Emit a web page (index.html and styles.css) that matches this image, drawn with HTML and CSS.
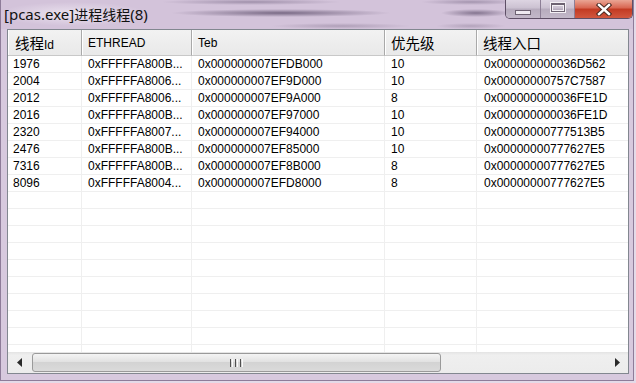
FILE: index.html
```html
<!DOCTYPE html>
<html>
<head>
    <meta charset="UTF-8">
    <title>[pcas.exe]进程线程(8)</title>
    <link rel="stylesheet" href="styles.css">
</head>
<body>
<div class="window">
    <div class="titlebar">
        <div class="title">[pcas.exe]<span class="title-cjk">进程线程</span>(8)</div>
        <div class="caption">
            <div class="cbtn cbtn-min"><span class="min-glyph"></span></div>
            <div class="cbtn cbtn-max"><span class="max-glyph"></span></div>
            <div class="cbtn cbtn-close">
                <svg width="16" height="13" viewBox="0 0 16 13">
                    <path d="M3 2 L13 11 M13 2 L3 11" stroke="#4a2a22" stroke-width="4.4" stroke-linecap="square"/>
                    <path d="M3 2 L13 11 M13 2 L3 11" stroke="#ffffff" stroke-width="2.4" stroke-linecap="square"/>
                </svg>
            </div>
        </div>
    </div>
    <div class="client">
        <div class="listview">
            <div class="rows">
                <table class="grid">
                    <colgroup>
                        <col class="c-id"><col class="c-eth"><col class="c-teb"><col class="c-pri"><col class="c-entry">
                    </colgroup>
                    <thead>
                        <tr>
                            <th><span class="cjk">线程</span>Id</th>
                            <th>ETHREAD</th>
                            <th>Teb</th>
                            <th><span class="cjk">优先级</span></th>
                            <th><span class="cjk">线程入口</span></th>
                        </tr>
                    </thead>
                    <tbody>
                        <tr><td>1976</td><td>0xFFFFFA800B...</td><td>0x000000007EFDB000</td><td>10</td><td>0x000000000036D562</td></tr>
                        <tr><td>2004</td><td>0xFFFFFA8006...</td><td>0x000000007EF9D000</td><td>10</td><td>0x00000000757C7587</td></tr>
                        <tr><td>2012</td><td>0xFFFFFA8006...</td><td>0x000000007EF9A000</td><td>8</td><td>0x000000000036FE1D</td></tr>
                        <tr><td>2016</td><td>0xFFFFFA800B...</td><td>0x000000007EF97000</td><td>10</td><td>0x000000000036FE1D</td></tr>
                        <tr><td>2320</td><td>0xFFFFFA8007...</td><td>0x000000007EF94000</td><td>10</td><td>0x00000000777513B5</td></tr>
                        <tr><td>2476</td><td>0xFFFFFA800B...</td><td>0x000000007EF85000</td><td>10</td><td>0x00000000777627E5</td></tr>
                        <tr><td>7316</td><td>0xFFFFFA800B...</td><td>0x000000007EF8B000</td><td>8</td><td>0x00000000777627E5</td></tr>
                        <tr><td>8096</td><td>0xFFFFFA8004...</td><td>0x000000007EFD8000</td><td>8</td><td>0x00000000777627E5</td></tr>
                        <tr><td></td><td></td><td></td><td></td><td></td></tr>
                        <tr><td></td><td></td><td></td><td></td><td></td></tr>
                        <tr><td></td><td></td><td></td><td></td><td></td></tr>
                        <tr><td></td><td></td><td></td><td></td><td></td></tr>
                        <tr><td></td><td></td><td></td><td></td><td></td></tr>
                        <tr><td></td><td></td><td></td><td></td><td></td></tr>
                        <tr><td></td><td></td><td></td><td></td><td></td></tr>
                        <tr><td></td><td></td><td></td><td></td><td></td></tr>
                        <tr><td></td><td></td><td></td><td></td><td></td></tr>
                        <tr><td></td><td></td><td></td><td></td><td></td></tr>
                    </tbody>
                </table>
            </div>
            <div class="hscroll">
                <div class="sb-arrow">
                    <svg width="6" height="9" viewBox="0 0 6 9"><path d="M5 0 L0 4.5 L5 9 Z" fill="#2a2a2a"/></svg>
                </div>
                <div class="sb-track">
                    <div class="sb-thumb">
                        <span class="grip"></span><span class="grip"></span><span class="grip"></span>
                    </div>
                </div>
                <div class="sb-arrow">
                    <svg width="6" height="9" viewBox="0 0 6 9"><path d="M1 0 L6 4.5 L1 9 Z" fill="#2a2a2a"/></svg>
                </div>
            </div>
        </div>
    </div>
</div>
</body>
</html>
```

FILE: styles.css
```css
body {
    margin: 0px;
    width: 636px;
    height: 383px;
    overflow: hidden;
    background-color: #e4dae8;
    font-family: 'Liberation Sans', 'Noto Sans CJK SC', sans-serif;
}
.window {
    width: 634px;
    height: 381px;
    box-sizing: border-box;
    border: 1px solid #8e7c99;
    border-top: none;
    background-color: #d7c9de;
    display: flex;
    flex-direction: column;
}
.titlebar {
    height: 29px;
    display: flex;
    align-items: flex-start;
    justify-content: space-between;
    background-color: #d3c3da;
    background-image:
        radial-gradient(75px 12px at 72px 14px, rgba(236,228,240,0.95), rgba(236,228,240,0)),
        radial-gradient(110px 4px at 280px 13px, rgba(105,90,118,0.85), rgba(105,90,118,0)),
        radial-gradient(35px 4px at 475px 13px, rgba(105,90,118,0.75), rgba(105,90,118,0)),
        radial-gradient(90px 3px at 250px 2px, rgba(125,110,138,0.6), rgba(125,110,138,0)),
        radial-gradient(50px 3px at 470px 2px, rgba(125,110,138,0.55), rgba(125,110,138,0)),
        radial-gradient(70px 3px at 340px 26px, rgba(140,124,150,0.5), rgba(140,124,150,0)),
        radial-gradient(35px 3px at 470px 26px, rgba(140,124,150,0.45), rgba(140,124,150,0));
}
.title {
    font-family: 'Noto Sans', 'Noto Sans CJK SC', sans-serif;
    font-size: 15px;
    line-height: 28px;
    padding-left: 3px;
    color: #111111;
    white-space: nowrap;
}
.title-cjk {
    font-family: 'Noto Sans CJK SC', sans-serif;
    font-size: 14px;
}
/* caption buttons */
.caption {
    display: flex;
    height: 18px;
    border: 1px solid #5e4f66;
    border-top: none;
    border-radius: 0px 0px 5px 5px;
    overflow: hidden;
}
.cbtn {
    height: 18px;
    display: flex;
    align-items: center;
    justify-content: center;
}
.cbtn-min, .cbtn-max {
    background: linear-gradient(#ddd5e2, #cbc1d1 45%, #b6abbd 50%, #c3b8c9);
    border-right: 1px solid #8d7f96;
}
.cbtn-min {
    width: 34px;
}
.cbtn-max {
    width: 33px;
}
.cbtn-close {
    width: 57px;
    background: linear-gradient(#eaa594, #d8644f 45%, #c23a22 50%, #d1573f);
}
.min-glyph {
    width: 14px;
    height: 3px;
    margin-top: 6px;
    border: 1px solid #6d6272;
    background-color: #efeaf1;
}
.max-glyph {
    width: 12px;
    height: 6px;
    border: 1px solid #6d6272;
    border-top-width: 2px;
    box-shadow: inset 0 0 0 1px #f4f0f5, 0 0 0 1px #f4f0f5;
    margin-top: -3px;
}
.client {
    flex: 1;
    padding: 0px 4px 6px 6px;
}
.listview {
    height: 345px;
    box-sizing: border-box;
    border: 1px solid #828790;
    background-color: #ffffff;
    display: flex;
    flex-direction: column;
}
.rows {
    flex: 1;
    overflow: hidden;
}
.grid {
    table-layout: fixed;
    width: 669px;
    border-collapse: separate;
    border-spacing: 0px;
    font-size: 12px;
    color: #000000;
}
.c-id { width: 74px; }
.c-eth { width: 110px; }
.c-teb { width: 193px; }
.c-pri { width: 92px; }
.c-entry { width: 200px; }
.grid th {
    height: 26px;
    box-sizing: border-box;
    padding: 0px 0px 0px 6px;
    text-align: left;
    font-weight: normal;
    background: linear-gradient(#f2f2f2, #e9e9e9);
    border-right: 1px solid #a9a9a9;
    border-bottom: 1px solid #c8c8c8;
    box-shadow: inset 1px 0 0 #ffffff;
    white-space: nowrap;
    overflow: hidden;
}
.grid th:first-child {
    padding-left: 7px;
}
.cjk {
    font-family: 'Noto Sans CJK SC', sans-serif;
    font-size: 14.5px;
}
.grid td {
    height: 17px;
    box-sizing: border-box;
    padding: 1px 0px 0px 6px;
    border-right: 1px solid #efefef;
    border-bottom: 1px solid #efefef;
    white-space: nowrap;
    overflow: hidden;
    line-height: 15px;
}
.grid td:first-child {
    padding-left: 5px;
}
.grid td:nth-child(5) {
    padding-left: 7px;
}
/* horizontal scrollbar */
.hscroll {
    height: 21px;
    display: flex;
    background: linear-gradient(#e3e3e3, #efefef 15%, #ececec);
}
.sb-arrow {
    width: 23px;
    display: flex;
    align-items: center;
    justify-content: center;
}
.sb-track {
    flex: 1;
    padding: 1px 0px 1px 0px;
    display: flex;
}
.sb-thumb {
    width: 409px;
    margin-left: 1px;
    box-sizing: border-box;
    border: 1px solid #9a9a9a;
    border-radius: 3px;
    background: linear-gradient(#f4f4f4, #e2e2e2 45%, #d3d3d3 50%, #dadada);
    display: flex;
    align-items: center;
    justify-content: center;
    gap: 2px;
}
.grip {
    width: 1px;
    height: 8px;
    border-left: 1px solid #4f4f4f;
    border-right: 1px solid #fafafa;
}
```
